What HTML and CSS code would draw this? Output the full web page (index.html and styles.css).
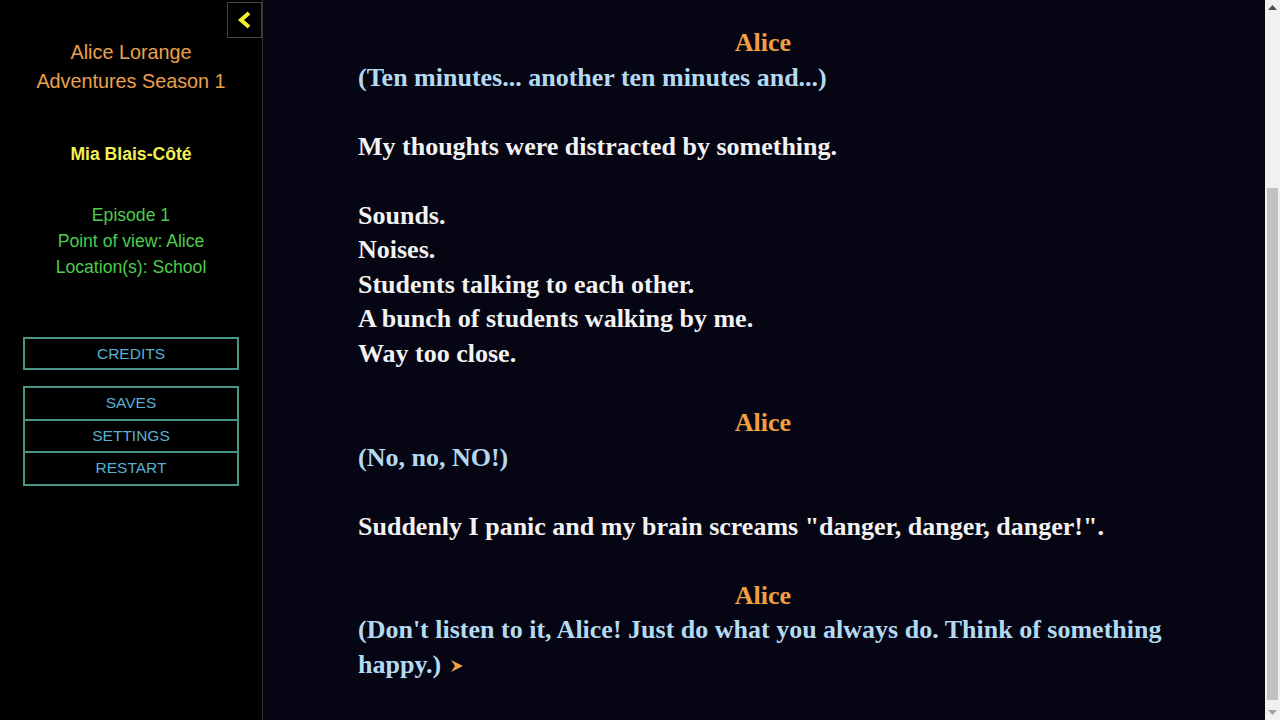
FILE: index.html
```html
<!DOCTYPE html>
<html lang="en">
<head>
<meta charset="utf-8">
<title>Alice Lorange Adventures Season 1</title>
<link rel="stylesheet" href="styles.css">
</head>
<body>
<div class="app">
<aside class="ui-bar">
<button class="ui-toggle" title="Toggle the UI bar">
<svg width="16" height="20" viewBox="0 0 16 20"><path d="M12 3 L4 10 L12 17" fill="none" stroke="#f2ee2a" stroke-width="4" stroke-linejoin="miter"/></svg>
</button>
<div class="story-title">Alice Lorange<br>Adventures Season 1</div>
<div class="story-author">Mia Blais-Côté</div>
<div class="story-caption">Episode 1<br>Point of view: Alice<br>Location(s): School</div>
<ul class="menu-story">
<li><a href="#">CREDITS</a></li>
</ul>
<ul class="menu-core">
<li><a href="#">SAVES</a></li>
<li><a href="#">SETTINGS</a></li>
<li><a href="#">RESTART</a></li>
</ul>
</aside>
<main class="story">
<div class="passage">
<div class="speaker">Alice</div>
<span class="thought">(Ten minutes... another ten minutes and...)</span><br>
<br>
My thoughts were distracted by something.<br>
<br>
Sounds.<br>
Noises.<br>
Students talking to each other.<br>
A bunch of students walking by me.<br>
Way too close.<br>
<br>
<div class="speaker">Alice</div>
<span class="thought">(No, no, NO!)</span><br>
<br>
Suddenly I panic and my brain screams "danger, danger, danger!".<br>
<br>
<div class="speaker">Alice</div>
<span class="thought">(Don't listen to it, Alice! Just do what you always do. Think of something happy.)</span>
<a href="#" class="next"><svg width="14" height="14" viewBox="0 0 14 14"><path d="M1 1 L13 7 L1 13 L5 7 Z" fill="#f0a040"/></svg></a>
</div>
</main>
<div class="scrollbar">
<div class="sb-arrow"><svg width="9" height="5" viewBox="0 0 9 5"><path d="M0 5 L4.5 0 L9 5 Z" fill="#505050"/></svg></div>
<div class="sb-thumb"></div>
<div class="sb-arrow"><svg width="9" height="5" viewBox="0 0 9 5"><path d="M0 0 L4.5 5 L9 0 Z" fill="#a3a3a3"/></svg></div>
</div>
</div>
</body>
</html>
```
FILE: styles.css
```css
html,body{
margin:0;
height:100%;
}
body{
background-color:#050513;
overflow:hidden;
}
.app{
display:flex;
height:100vh;
}
.ui-bar{
flex-shrink:0;
background-color:#000;
border-right:1px solid #333;
display:flex;
flex-direction:column;
padding:2px 23px 0 23px;
box-sizing:border-box;
width:263px;
font-family:"Liberation Sans", Arial, sans-serif;
text-align:center;
}
.ui-toggle{
align-self:flex-end;
margin-right:-23px;
width:35px;
height:36px;
background:#000;
border:1px solid #444;
padding:0;
display:flex;
align-items:center;
justify-content:center;
cursor:pointer;
}
.story-title{
font-size:19.8px;
line-height:29px;
color:#eca04e;
}
.story-author{
margin-top:46px;
font-size:17.6px;
line-height:24px;
font-weight:bold;
color:#f2f04e;
}
.story-caption{
margin-top:36px;
font-size:17.6px;
line-height:26px;
color:#4ccc4c;
}
ul{
list-style:none;
margin:0;
padding:0;
border:2px solid #4a9486;
}
.menu-story{
margin-top:57px;
}
.menu-core{
margin-top:16px;
}
li + li{
border-top:2px solid #4a9486;
}
li a{
display:block;
height:29px;
line-height:29px;
font-size:15.5px;
color:#5ab0d4;
text-decoration:none;
}
.menu-core li a{
height:30.7px;
line-height:30.7px;
}
.story{
flex:1;
overflow:hidden;
font-family:"Liberation Serif", "Times New Roman", serif;
font-weight:bold;
font-size:26px;
line-height:34.55px;
color:#f2f2f2;
}
.passage{
width:810px;
padding:26px 0 37px 95px;
}
.speaker{
text-align:center;
color:#f0a040;
}
.thought{
color:#b4daf2;
}
.next{
display:inline-block;
margin-left:2px;
}
.scrollbar{
width:15px;
flex-shrink:0;
background:#f1f1f1;
display:flex;
flex-direction:column;
align-items:center;
}
.sb-arrow{
height:15px;
width:15px;
display:flex;
align-items:center;
justify-content:center;
}
.sb-thumb{
width:11px;
height:512px;
margin-top:auto;
margin-bottom:5px;
background:#c1c1c1;
}
```
